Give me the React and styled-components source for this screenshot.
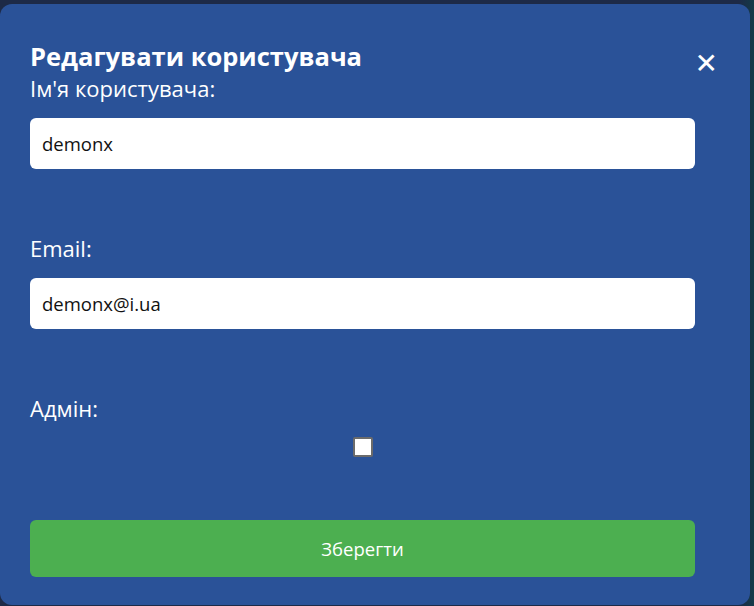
import React, { useState } from "react"
import styled, { createGlobalStyle } from "styled-components"

const GlobalStyle = createGlobalStyle`
  html, body {
    margin: 0;
    padding: 0;
    background: #1b2a45;
    font-family: "Open Sans", "Noto Sans", sans-serif;
    overflow: hidden;
  }
`

const Backdrop = styled.div`
  width: 754px;
  height: 606px;
  background: linear-gradient(90deg, #1d2a47 0%, #1d2a47 98%, #133a48 100%);
  padding: 4px 4px 0 0;
  box-sizing: border-box;
`

const Modal = styled.div`
  width: 750px;
  height: 601px;
  box-sizing: border-box;
  background: #2a5298;
  border-radius: 12px;
  padding: 36px 55px 0 30px;
  display: flex;
  flex-direction: column;
  position: relative;
  color: #fff;
`

const Title = styled.h2`
  margin: 0;
  font-size: 25.5px;
  line-height: 32px;
  font-weight: 700;
`

const CloseBtn = styled.button`
  position: absolute;
  top: 46px;
  right: 32px;
  background: none;
  border: none;
  color: #fff;
  font-size: 28px;
  line-height: 28px;
  padding: 0;
  cursor: pointer;
  font-family: "DejaVu Sans", sans-serif;
`

const Label = styled.label`
  display: block;
  font-size: 22px;
  line-height: 30px;
  margin-top: ${(p) => p.$top}px;
`

const Input = styled.input`
  display: block;
  width: 100%;
  box-sizing: border-box;
  height: 51px;
  margin-top: 15px;
  border: none;
  border-radius: 6px;
  padding: 0 12px;
  font-family: inherit;
  font-size: 18.5px;
  color: #111;
  background: #fff;
  outline: none;
`

const CheckRow = styled.div`
  display: flex;
  justify-content: center;
  margin-top: 14px;
`

const Check = styled.input`
  width: 20px;
  height: 20px;
  margin: 0;
  appearance: none;
  background: #fff;
  border: 2px solid #6b6b6b;
  border-radius: 2px;
  box-sizing: border-box;
`

const SaveBtn = styled.button`
  margin-top: 63px;
  height: 57px;
  width: 100%;
  border: none;
  border-radius: 6px;
  background: #4caf50;
  color: #fff;
  font-family: inherit;
  font-size: 18.5px;
  cursor: pointer;
`

export default function App() {
  const [name, setName] = useState("demonx")
  const [email, setEmail] = useState("demonx@i.ua")
  const [admin, setAdmin] = useState(false)

  return (
    <>
      <GlobalStyle />
      <Backdrop>
        <Modal>
          <Title>Редагувати користувача</Title>
          <CloseBtn aria-label="close">✕</CloseBtn>
          <Label $top={1}>Ім'я користувача:</Label>
          <Input value={name} onChange={(e) => setName(e.target.value)} />
          <Label $top={64}>Email:</Label>
          <Input value={email} onChange={(e) => setEmail(e.target.value)} />
          <Label $top={64}>Адмін:</Label>
          <CheckRow>
            <Check
              type="checkbox"
              checked={admin}
              onChange={(e) => setAdmin(e.target.checked)}
            />
          </CheckRow>
          <SaveBtn>Зберегти</SaveBtn>
        </Modal>
      </Backdrop>
    </>
  )
}
